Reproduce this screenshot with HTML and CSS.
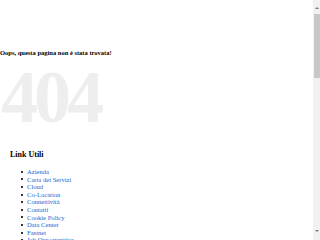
FILE: index.html
```html
<!DOCTYPE html>
<html lang="it">
<head>
<meta charset="utf-8">
<title>404</title>
<link rel="stylesheet" href="styles.css">
</head>
<body>
<main class="page">
  <h1 class="oops">Oops, questa pagina non è stata trovata!</h1>
  <div class="code">404</div>
  <section class="links">
    <h2 class="links-title">Link Utili</h2>
    <ul class="links-list">
      <li><a href="#">Azienda</a></li>
      <li><a href="#">Carta dei Servizi</a></li>
      <li><a href="#">Cloud</a></li>
      <li><a href="#">Co-Location</a></li>
      <li><a href="#">Connettività</a></li>
      <li><a href="#">Contatti</a></li>
      <li><a href="#">Cookie Policy</a></li>
      <li><a href="#">Data Center</a></li>
      <li><a href="#">Fastnet</a></li>
      <li><a href="#">Job Opportunities</a></li>
    </ul>
  </section>
</main>
<div class="scrollbar" aria-hidden="true">
  <span class="arrow arrow-up"></span>
  <span class="thumb"></span>
  <span class="arrow arrow-down"></span>
</div>
</body>
</html>
```
FILE: styles.css
```css
html {
  font-family: "Liberation Serif", "Times New Roman", serif;
  color: #000;
  background: #fff;
}
body {
  margin: 0;
  height: 240px;
  overflow: hidden;
}
.page {
  padding-top: 49px;
}
.oops {
  margin: 0;
  font-size: 6.5px;
  font-weight: bold;
  line-height: 7px;
}
.code {
  margin-top: 13px;
  font-size: 74px;
  font-weight: bold;
  letter-spacing: -4px;
  line-height: 56px;
  color: #eeeeee;
  padding-left: 1px;
}
.links {
  padding-left: 10px;
  margin-top: 25px;
}
.links-title {
  margin: 0 0 9px;
  font-size: 8px;
  font-weight: bold;
  line-height: 9px;
}
.links-list {
  margin: 0;
  padding-left: 11px;
  font-size: 6.6px;
  line-height: 7.6px;
  list-style: none;
}
.links-list li {
  display: flex;
  align-items: center;
  gap: 4px;
}
.links-list li::before {
  content: "";
  width: 2px;
  height: 2px;
  background: #333;
}
.links-list a {
  color: #1a5fd0;
  text-decoration: none;
}
.scrollbar {
  position: fixed;
  top: 0;
  right: 0;
  width: 7px;
  height: 240px;
  background: #f1f1f1;
  display: flex;
  flex-direction: column;
  align-items: center;
}
.arrow {
  width: 0;
  height: 0;
  border-left: 2px solid transparent;
  border-right: 2px solid transparent;
}
.arrow-up {
  margin-top: 7px;
  border-bottom: 2px solid #7a7a7a;
}
.arrow-down {
  margin-top: auto;
  margin-bottom: 8px;
  border-top: 2px solid #7a7a7a;
}
.thumb {
  margin-top: 5px;
  width: 6px;
  height: 64px;
  background: #c8c8c8;
}
```
